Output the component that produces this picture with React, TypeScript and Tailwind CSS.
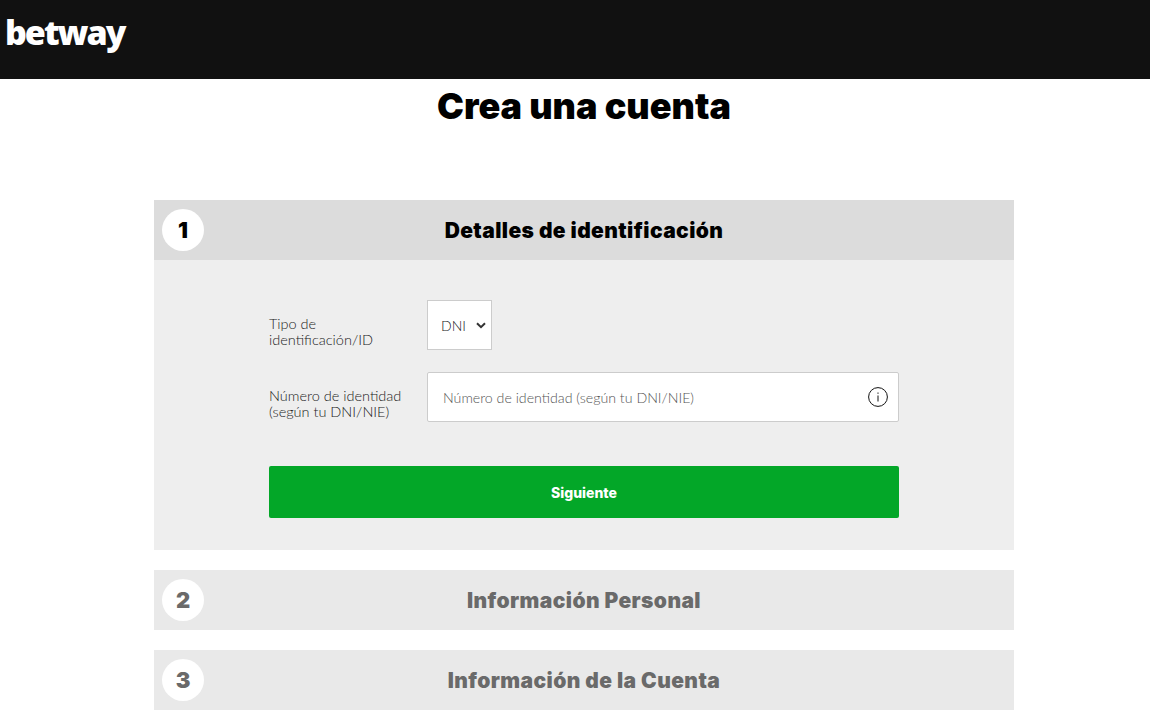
const heading = { fontFamily: '"Inter", "Liberation Sans", sans-serif' }

function StepHeader({ step, title, active }: { step: number; title: string; active?: boolean }) {
  return (
    <div className={`flex items-center h-[60px] pl-2 relative ${active ? 'bg-[#dcdcdc] text-black' : 'bg-[#e9e9e9] text-[#6a6a6a]'}`}>
      <div className="w-[42px] h-[42px] rounded-full bg-white flex items-center justify-center text-[22px] font-black" style={heading}>
        {step}
      </div>
      <h2 className="flex-1 text-center pr-[50px] pt-[1px] text-[21px] tracking-[0.4px] font-black" style={heading}>
        {title}
      </h2>
    </div>
  )
}

export default function App() {
  return (
    <div className="min-h-[720px] bg-white overflow-hidden font-['Lato',sans-serif]">
      {/* Header */}
      <header className="h-[79px] bg-[#111111] pl-[5px] pt-[9px]">
        <span className="block text-white text-[34px] leading-[46px] font-extrabold tracking-[-2px] font-['Open_Sans',sans-serif]">
          betway
        </span>
      </header>

      <div className="w-[860px] ml-[154px]">
        <h1 className="text-center text-[36px] leading-[52px] font-black pt-[1px] mb-[68px] text-black" style={heading}>
          Crea una cuenta
        </h1>

        {/* Paso 1 */}
        <StepHeader step={1} title="Detalles de identificación" active />
        <div className="bg-[#eeeeee] px-[115px] pt-[40px] pb-[32px] mb-[20px]">
          <div className="flex items-start mb-[22px]">
            <label className="w-[158px] pt-[16px] text-[14.5px] leading-[16px] font-light text-[#222222]">
              Tipo de
              <br />
              identificación/ID
            </label>
            <div className="relative w-[65px]">
              <select className="w-full h-[50px] appearance-none bg-white border border-[#cccccc] pl-[13px] text-[14px] font-light text-[#222222]">
                <option>DNI</option>
              </select>
              <svg className="absolute right-[6px] top-[22px] pointer-events-none" width="10" height="7" viewBox="0 0 10 7" fill="none" stroke="#333333" strokeWidth="2">
                <path d="M1 1.2L5 5.2L9 1.2" />
              </svg>
            </div>
          </div>
          <div className="flex items-start mb-[44px]">
            <label className="w-[158px] pt-[16px] text-[14.5px] leading-[16px] font-light text-[#222222]">
              Número de identidad
              <br />
              (según tu DNI/NIE)
            </label>
            <div className="relative flex-1">
              <input
                placeholder="Número de identidad (según tu DNI/NIE)"
                className="w-full h-[50px] bg-white border border-[#cccccc] rounded-[2px] pl-[15px] pr-[40px] text-[14.2px] font-light placeholder:text-[#555555]"
              />
              <svg className="absolute right-[11px] top-[15px]" width="20" height="20" viewBox="0 0 20 20" fill="none" stroke="#111111">
                <circle cx="10" cy="10" r="9.4" strokeWidth="1" />
                <path d="M10 8.5V14.5M10 5.5V6.8" strokeWidth="1" />
              </svg>
            </div>
          </div>
          <button className="w-full h-[52px] bg-[#03a728] rounded-[2px] text-white text-[14px] font-extrabold" style={heading}>
            Siguiente
          </button>
        </div>

        {/* Pasos siguientes */}
        <div className="mb-[20px]">
          <StepHeader step={2} title="Información Personal" />
        </div>
        <StepHeader step={3} title="Información de la Cuenta" />
      </div>
    </div>
  )
}
